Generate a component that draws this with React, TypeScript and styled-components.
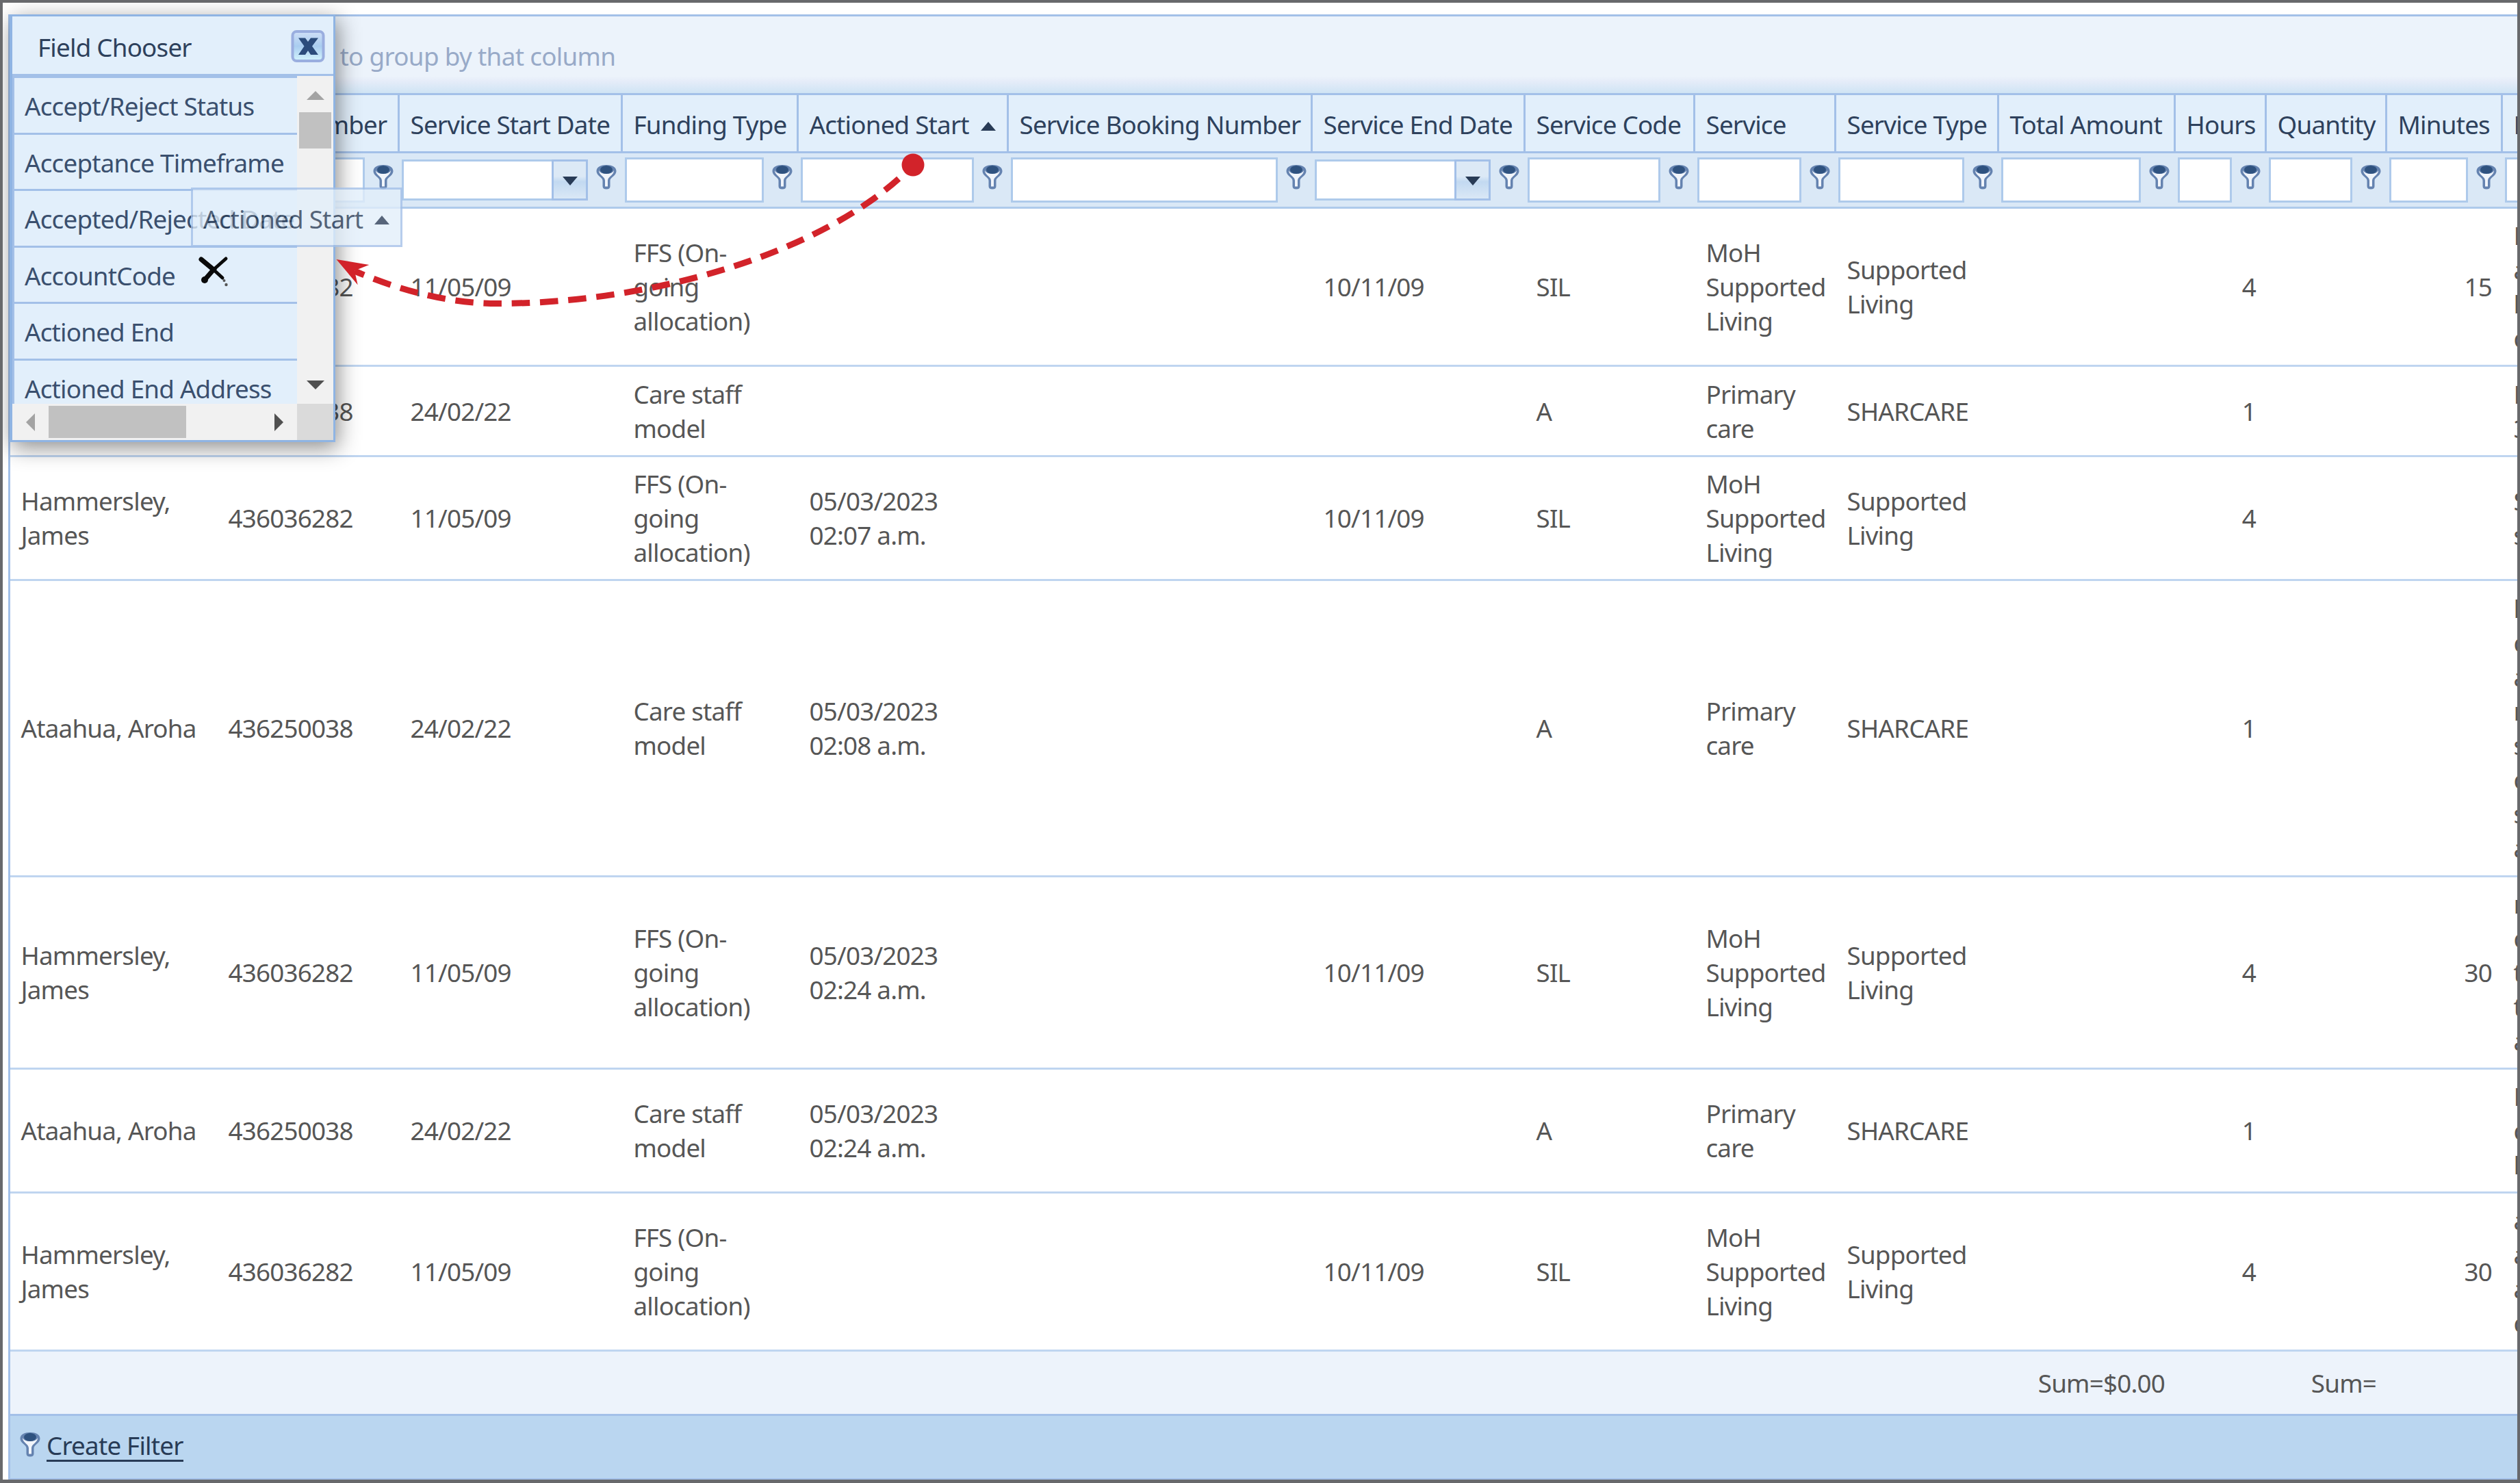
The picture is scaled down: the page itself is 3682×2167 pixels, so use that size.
import styled, { createGlobalStyle } from "styled-components";

const GlobalStyle = createGlobalStyle`
  * {
    box-sizing: border-box;
  }
  body {
    margin: 0;
    font-family: "Noto Sans", "Open Sans", sans-serif;
    font-size: 36.8px;
    line-height: 50px;
    letter-spacing: -0.8px;
    color: #565656;
  }
`;

const Page = styled.div`
  position: relative;
  width: 3682px;
  height: 2167px;
  padding: 17px 0 0 8px;
  border: solid #68696c;
  border-width: 4px 4px 5px 4px;
  background-color: white;
  overflow: hidden;
`;

const Grid = styled.div`
  width: 3900px;
  border: 3px solid #a3c0e8;
`;

const GroupPanel = styled.div`
  height: 112px;
  padding: 33px 0 0 15px;
  color: #98aac8;
  letter-spacing: -0.67px;
  background: linear-gradient(#ecf3fb 78%, #e6edf9 84%, #cfe4f4);
`;

// the first width is measured from inside the grid border
const columns = "303px 266px 326px 257px 307px 444px 311px 248px 206px 238px 258px 133px 176px 169px 200px";

const Row = styled.div<{ $height: number }>`
  display: grid;
  grid-template-columns: ${columns};
  height: ${(props) => props.$height}px;
`;

const HeaderRow = styled(Row)`
  border-top: 3px solid #a3c0e8;
  border-bottom: 3px solid #a3c0e8;
  background-color: #e2effb;
  color: #2e415c;
`;

const HeaderCell = styled.div`
  display: flex;
  align-items: center;
  padding: 4px 0 0 15.5px;
  border-right: 3px solid #a3c0e8;
  white-space: nowrap;
`;

const SortArrow = styled.i`
  margin: 4px 0 0 17px;
  border: solid transparent;
  border-width: 0 11px 13px 11px;
  border-bottom-color: #283b56;
`;

const FilterRow = styled(Row)`
  border-bottom: 3px solid #aecaeb;
  background-color: #dae8f6;
`;

const FilterCell = styled.div`
  display: flex;
  align-items: flex-start;
  justify-content: space-between;
  padding: 6px 9px 0 3px;

  & > svg {
    margin-top: 10px;
  }
`;

const FilterInput = styled.div`
  flex: 1;
  height: 66px;
  margin-right: 12px;
  border: 3px solid #aecaeb;
  background-color: white;
`;

const DateInput = styled(FilterInput)`
  display: flex;
  justify-content: flex-end;
  height: 60px;
  margin-top: 3px;
`;

const DropButton = styled.div`
  display: flex;
  align-items: center;
  justify-content: center;
  width: 53px;
  margin: -3px -3px -3px 0;
  border: 3px solid #a3c0e8;
  background: linear-gradient(#dce9f6 40%, #c2d9f1 55%, #dae8f6);

  &::after {
    content: "";
    margin-top: 3px;
    border: solid transparent;
    border-width: 13px 11px 0 11px;
    border-top-color: #283b56;
  }
`;

const Cell = styled.div<{ $right?: boolean }>`
  display: flex;
  align-items: center;
  justify-content: ${(props) => (props.$right ? "flex-end" : "flex-start")};
  padding: 0 16px 0 15.5px;
  white-space: pre;
`;

const DataRow = styled(Row)`
  border-bottom: 3px solid #bfd5f0;
`;

const SummaryRow = styled(Row)`
  border-bottom: 3px solid #a3c0e8;
  background-color: #edf3fb;
`;

const Footer = styled.div`
  display: flex;
  align-items: center;
  height: 91px;
  padding: 0 0 0 14px;
  background-color: #bad6f0;
  color: #283b56;

  & > svg {
    margin-bottom: 8px;
  }
`;

const FilterLink = styled.span`
  margin: 0 0 2px 9px;
  border-bottom: 3px solid #283b56;
  line-height: 41px;
`;

const Chooser = styled.div`
  position: absolute;
  left: 10px;
  top: 17px;
  width: 476px;
  height: 625px;
  border: 3px solid #8fb4e3;
  border-left-width: 4px;
  background-color: #e2effb;
  box-shadow: 4px 8px 30px rgba(0, 0, 0, 0.45);
  color: #3a4f6e;
`;

const ChooserTitle = styled.div`
  display: flex;
  align-items: center;
  justify-content: space-between;
  height: 87px;
  padding: 5px 12px 0 37px;
  border-bottom: 3px solid #a3c0e8;
  color: #2e415c;

  & > svg {
    margin-bottom: 1px;
  }
`;

const ChooserBody = styled.div`
  display: grid;
  grid-template: 479px 53px / 416px 53px;
`;

const FieldList = styled.div`
  border: solid #a3c0e8;
  border-width: 3px 0 0 3px;
  overflow: hidden;
`;

const Field = styled.div`
  height: 82.5px;
  padding: 16px 0 0 15px;
  border-bottom: 3px solid #a3c0e8;
  white-space: nowrap;
`;

const Track = styled.div<{ $vertical?: boolean }>`
  display: flex;
  flex-direction: ${(props) => (props.$vertical ? "column" : "row")};
  align-items: center;
  justify-content: space-between;
  padding: ${(props) => (props.$vertical ? "21px 0" : "0 20px")};
  background-color: #f1f1f1;
`;

const Thumb = styled.div<{ $vertical?: boolean }>`
  width: ${(props) => (props.$vertical ? 47 : 201)}px;
  height: ${(props) => (props.$vertical ? 53 : 47)}px;
  margin: ${(props) => (props.$vertical ? "6px 0 auto" : "0 auto 0 7px")};
  background-color: #c1c1c1;
`;

const Corner = styled.div`
  background-color: #dadada;
`;

const DragGhost = styled.div`
  position: absolute;
  left: 275px;
  top: 270px;
  display: flex;
  align-items: center;
  width: 309px;
  height: 87px;
  padding: 4px 0 0 15px;
  border: 3px solid #a3c0e8;
  background-color: #e2effb;
  color: #283b56;
  opacity: 0.78;
`;

const Overlay = styled.svg`
  position: absolute;
  left: -4px;
  top: -4px;
`;

const headers = [
  "Name",
  "NDIS Number",
  "Service Start Date",
  "Funding Type",
  "Actioned Start",
  "Service Booking Number",
  "Service End Date",
  "Service Code",
  "Service",
  "Service Type",
  "Total Amount",
  "Hours",
  "Quantity",
  "Minutes",
  "Description",
];

const dateColumns = ["Service Start Date", "Service End Date"];
const numberColumns = [10, 11, 12, 13];

const fields = [
  "Accept/Reject Status",
  "Acceptance Timeframe",
  "Accepted/Rejected Date",
  "AccountCode",
  "Actioned End",
  "Actioned End Address",
];

const james = {
  name: "Hammersley,\nJames",
  number: "436036282",
  start: "11/05/09",
  funding: "FFS (On-\ngoing\nallocation)",
  end: "10/11/09",
  code: "SIL",
  service: "MoH\nSupported\nLiving",
  type: "Supported\nLiving",
  hours: "4",
};

const aroha = {
  name: "Ataahua, Aroha",
  number: "436250038",
  start: "24/02/22",
  funding: "Care staff\nmodel",
  end: "",
  code: "A",
  service: "Primary\ncare",
  type: "SHARCARE",
  hours: "1",
};

const rows = [
  { person: james, height: 231, actioned: "", minutes: "15", note: "D\na\nl\nc" },
  { person: aroha, height: 132, actioned: "", minutes: "", note: "D\n3" },
  { person: james, height: 181, actioned: "05/03/2023\n02:07 a.m.", minutes: "", note: "S\ns" },
  { person: aroha, height: 433, actioned: "05/03/2023\n02:08 a.m.", minutes: "", note: "l\nc\na\nr\ns\nc\ns\na" },
  { person: james, height: 281, actioned: "05/03/2023\n02:24 a.m.", minutes: "30", note: "r\nc\nt\nt\na" },
  { person: aroha, height: 181, actioned: "05/03/2023\n02:24 a.m.", minutes: "", note: "D\nc\nl" },
  { person: james, height: 231, actioned: "", minutes: "30", note: "a\na\na\nc" },
];

function Funnel() {
  return (
    <svg width="30" height="38" viewBox="0 0 30 38">
      <path
        d="M0.500 10C0.500 4 7 1 15 1S29.500 4 29.500 10C29.500 17 20.500 19 20.500 24V32Q20.500 36.500 15 36.500T9.500 32V24C9.500 19 0.500 17 0.500 10Z"
        fill="#6583b0"
      />
      <path d="M4 9Q6 14 15 14T26 9C26 16 17 18 17 24V32.500H13V24C13 18 4 16 4 9Z" fill="#f1f5fb" />
      <ellipse cx="15" cy="8" rx="9" ry="6" fill="#2f527f" />
    </svg>
  );
}

function CloseIcon() {
  return (
    <svg width="50" height="50" viewBox="0 0 50 50">
      <defs>
        <linearGradient id="close" x1="0" y1="0" x2="0" y2="1">
          <stop offset="0" stopColor="#cfdff7" />
          <stop offset="0.5" stopColor="#a9cdf0" />
          <stop offset="1" stopColor="#d3f4fd" />
        </linearGradient>
      </defs>
      <rect x="2.500" y="3" width="45" height="43" rx="6" fill="url(#close)" stroke="#9aaedf" strokeWidth="4" />
      <path d="M11 12.500H21L25 18L29 12.500H40L31 24.500L40 37H29L25 31L21 37H11L19.500 24.500Z" fill="#2b4c7c" />
    </svg>
  );
}

function Triangle({ points, color }: { points: string; color: string }) {
  return (
    <svg width="26" height="26" viewBox="0 0 26 26">
      <polygon points={points} fill={color} />
    </svg>
  );
}

function FieldChooser() {
  return (
    <Chooser>
      <ChooserTitle>
        Field Chooser
        <CloseIcon />
      </ChooserTitle>
      <ChooserBody>
        <FieldList>
          {fields.map((field) => (
            <Field key={field}>{field}</Field>
          ))}
        </FieldList>
        <Track $vertical>
          <Triangle points="0,14 13,1 26,14" color="#a3a3a3" />
          <Thumb $vertical />
          <Triangle points="0,13 26,13 13,26" color="#505050" />
        </Track>
        <Track>
          <Triangle points="13,0 13,26 0,13" color="#a3a3a3" />
          <Thumb />
          <Triangle points="13,0 13,26 26,13" color="#505050" />
        </Track>
        <Corner />
      </ChooserBody>
    </Chooser>
  );
}

function App() {
  return (
    <Page>
      <GlobalStyle />
      <Grid>
        <GroupPanel>Drag a column header here to group by that column</GroupPanel>
        <HeaderRow $height={88}>
          {headers.map((header) => (
            <HeaderCell key={header}>
              {header}
              {header === "Actioned Start" && <SortArrow />}
            </HeaderCell>
          ))}
        </HeaderRow>
        <FilterRow $height={81}>
          {headers.map((header) => (
            <FilterCell key={header}>
              {dateColumns.includes(header) ? (
                <DateInput>
                  <DropButton />
                </DateInput>
              ) : (
                <FilterInput />
              )}
              <Funnel />
            </FilterCell>
          ))}
        </FilterRow>
        {rows.map(({ person, height, actioned, minutes, note }, i) => {
          const values = [
            person.name,
            person.number,
            person.start,
            person.funding,
            actioned,
            "",
            person.end,
            person.code,
            person.service,
            person.type,
            "",
            person.hours,
            "",
            minutes,
            note,
          ];
          return (
            <DataRow key={i} $height={height}>
              {values.map((value, j) => (
                <Cell key={j} $right={numberColumns.includes(j)}>
                  {value}
                </Cell>
              ))}
            </DataRow>
          );
        })}
        <SummaryRow $height={94}>
          {headers.map((header, i) => (
            <Cell key={header} $right={numberColumns.includes(i)}>
              {header === "Total Amount" && "Sum=$0.00"}
              {header === "Quantity" && "Sum="}
            </Cell>
          ))}
        </SummaryRow>
        <Footer>
          <Funnel />
          <FilterLink>Create Filter</FilterLink>
        </Footer>
      </Grid>
      <FieldChooser />
      <DragGhost>
        Actioned Start
        <SortArrow />
      </DragGhost>
      <Overlay width="1500" height="700" viewBox="0 0 1500 700">
        {/* dashed path from the column header to the chooser */}
        <path
          d="M1334 241C1210 370 950 443.500 727 443.500C655 443.500 583 424 518 396"
          fill="none"
          stroke="#d2232a"
          strokeWidth="9"
          strokeDasharray="26.500 14.800"
          strokeDashoffset="-29"
        />
        <circle cx="1334" cy="241" r="16.500" fill="#d2232a" />
        <polygon points="491.500,379 539.300,387 518,395.500 522.700,416.300" fill="#d2232a" />
        {/* no-drop cursor */}
        <path d="M294 379L312 394L299 409" fill="none" stroke="#0a0a0a" strokeWidth="7" strokeLinecap="round" />
        <path d="M312 394L330 378M312 394L325 406" stroke="#0a0a0a" strokeWidth="5" strokeLinecap="round" />
        <circle cx="299" cy="409" r="5" fill="#0a0a0a" />
        <circle cx="327.500" cy="410" r="2" fill="#555" />
        <circle cx="330.500" cy="416" r="2.200" fill="#555" />
      </Overlay>
    </Page>
  );
}

export default App;
